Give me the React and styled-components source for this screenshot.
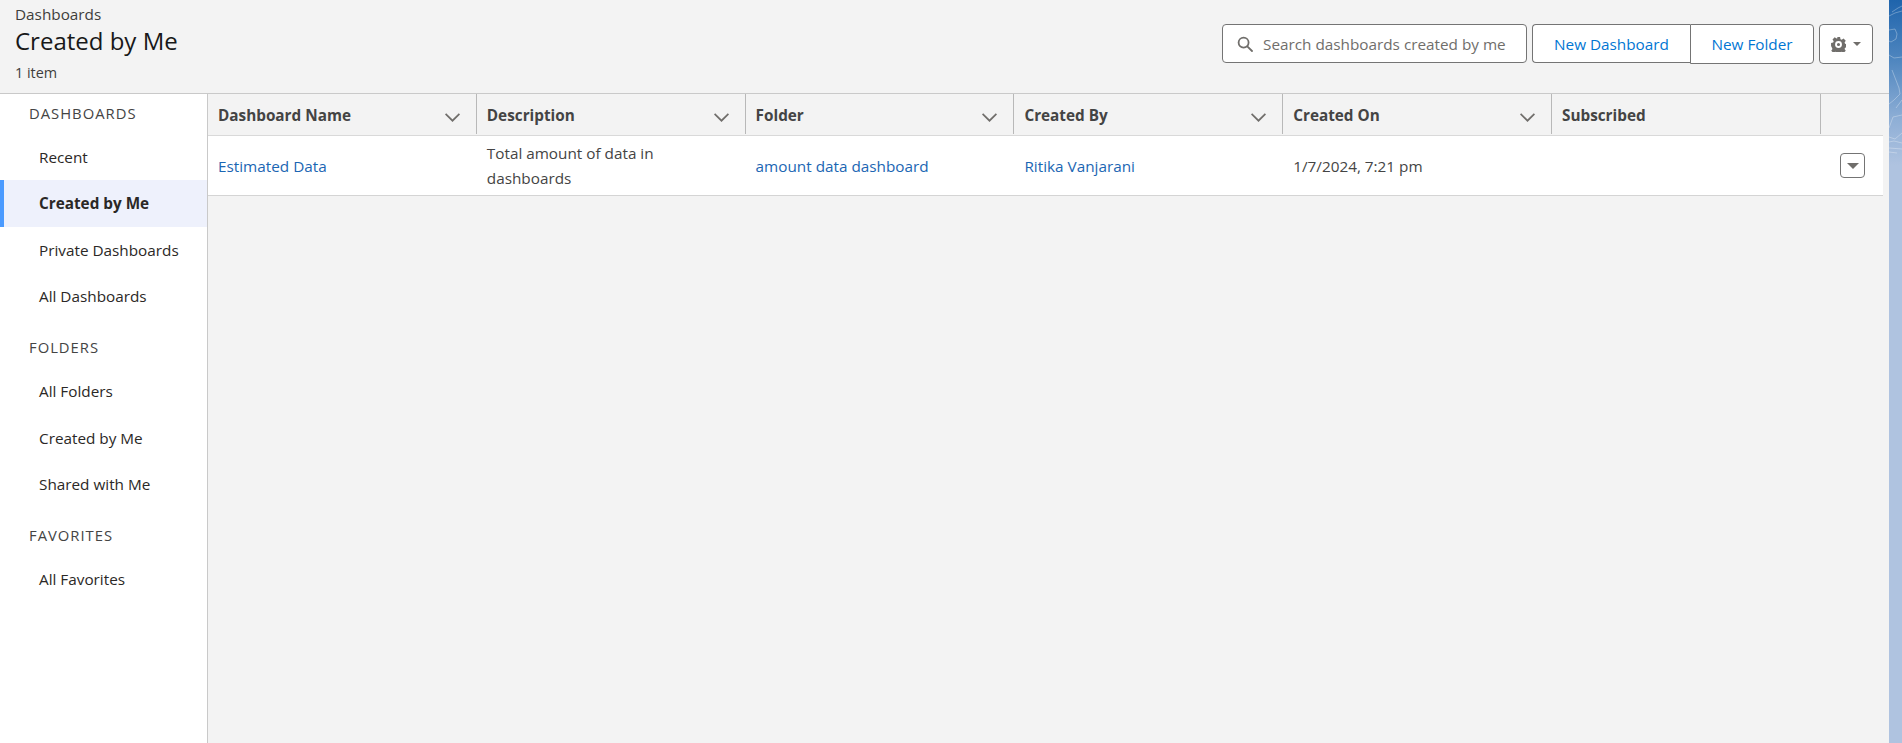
import styled, { createGlobalStyle } from 'styled-components';

const GlobalStyle = createGlobalStyle`
  html, body {
    margin: 0;
    height: 100%;
    overflow: hidden;
  }
  body {
    font-family: 'Open Sans', 'Noto Sans', sans-serif;
    font-size: 15.3px;
    color: #2b2826;
    background: #f3f3f3;
  }
`;

const nav = [
  { title: 'Dashboards', items: ['Recent', 'Created by Me', 'Private Dashboards', 'All Dashboards'], active: 'Created by Me' },
  { title: 'Folders', items: ['All Folders', 'Created by Me', 'Shared with Me'] },
  { title: 'Favorites', items: ['All Favorites'] },
];

const columns = [
  { label: 'Dashboard Name', sortable: true },
  { label: 'Description', sortable: true },
  { label: 'Folder', sortable: true },
  { label: 'Created By', sortable: true },
  { label: 'Created On', sortable: true },
  { label: 'Subscribed' },
];

const SortIcon = styled.svg`
  width: 15px;
  height: 9px;
  margin-top: 4px;
  flex: none;
`;

const Chevron = () => (
  <SortIcon viewBox="0 0 15 9" fill="none" stroke="#706e6b" strokeWidth="1.7">
    <path d="M.6.8 7.500 7.700 14.400.8" />
  </SortIcon>
);

const SearchIcon = () => (
  <svg width="16" height="16" viewBox="0 0 16 16" fill="none" stroke="#706e6b" strokeWidth="1.8">
    <circle cx="6.6" cy="6.6" r="5" />
    <path d="M10.3 10.3 15 15" strokeLinecap="round" />
  </svg>
);

const GearIcon = () => (
  <svg width="15" height="15" viewBox="0 0 24 24" fill="#706e6b">
    <path
      fillRule="evenodd"
      d="M9.500 0h5l.7 3.400 1.900.8 3-1.900 3.500 3.500-1.900 3 .8 1.900 3.400.7v5l-3.400.7-.8 1.900 1.900 3-3.500 3.500-3-1.900-1.900.8-.7 3.400h-5l-.7-3.400-1.900-.8-3 1.900-3.500-3.500 1.900-3-.8-1.900L.1 14.500v-5l3.400-.7.8-1.900-1.900-3 3.500-3.500 3 1.900 1.900-.8zM12 6.500a5.500 5.500 0 1 0 0 11 5.500 5.500 0 0 0 0-11zm0 3a2.500 2.500 0 1 1 0 5 2.500 2.500 0 0 1 0-5z"
    />
  </svg>
);

const Caret = styled.span`
  width: 0;
  height: 0;
  border-left: ${(p) => p.$size}px solid transparent;
  border-right: ${(p) => p.$size}px solid transparent;
  border-top: ${(p) => p.$size}px solid #706e6b;
`;

const Shell = styled.div`
  display: flex;
  height: 743px;
  width: 1902px;
`;

const Page = styled.div`
  width: 1889px;
  flex: none;
  display: flex;
  flex-direction: column;
`;

const Backdrop = styled.div`
  flex: 1;
  background: linear-gradient(180deg, #1f64ac 0, #4f86bf 60px, #8fafd6 120px, #afc3e0 165px, #afc3e0 100%);
`;

const Contours = () => (
  <svg width="13" height="743" viewBox="0 0 13 743" fill="none" stroke="#fff" strokeOpacity="0.3" strokeWidth="1">
    <path d="M3 12 9 8 13 6M0 16 6 13 13 11" />
    <path d="M0 30 6 29 8 34 7 39 2 42 0 41M0 55 5 58 13 57" />
    <path d="M3 70 10 88 11 94 5 100 0 104M13 100 7 108" />
    <path d="M0 128 4 117 13 115M0 137 6 139 13 133" />
    <path d="M0 142 5 141 13 143M0 148 13 149M0 152 8 153" />
  </svg>
);

const Header = styled.header`
  height: 94px;
  box-sizing: border-box;
  display: flex;
  justify-content: space-between;
  padding: 5px 16px 0 15px;
  border-bottom: 1px solid #c9c9c9;
`;

const Crumb = styled.div`
  line-height: 18px;
  color: #3e3e3c;
`;

const Title = styled.h1`
  margin: 2px 0 0;
  font-size: 24px;
  font-weight: 400;
  line-height: 32px;
  color: #181818;
`;

const Count = styled.div`
  margin-top: 7px;
  font-size: 14.400px;
  line-height: 18px;
  color: #3e3e3c;
`;

const Actions = styled.div`
  display: flex;
  align-items: flex-start;
  gap: 5px;
  margin-top: 19px;
`;

const Search = styled.div`
  width: 305px;
  height: 39px;
  box-sizing: border-box;
  display: flex;
  align-items: center;
  gap: 10px;
  padding-left: 14px;
  background: #fff;
  border: 1px solid #747474;
  border-radius: 4px;
  color: #706e6b;
  white-space: nowrap;
`;

const ButtonGroup = styled.div`
  display: flex;
  align-items: flex-start;
`;

const NewDashboard = styled.button`
  width: 158px;
  height: 39px;
  padding: 0;
  background: #fff;
  border: 1px solid #747474;
  border-right: 0;
  border-radius: 4px 0 0 4px;
  color: #0176d3;
  font: inherit;
`;

const NewFolder = styled.button`
  width: 124px;
  height: 40px;
  padding: 0;
  background: #fff;
  border: 1px solid #747474;
  border-radius: 0 4px 4px 0;
  color: #0176d3;
  font: inherit;
`;

const GearButton = styled.button`
  width: 54px;
  height: 40px;
  padding: 0;
  display: flex;
  align-items: center;
  justify-content: center;
  gap: 7px;
  background: #fff;
  border: 1px solid #747474;
  border-radius: 4px;
`;

const Body = styled.div`
  flex: 1;
  display: flex;
  min-height: 0;
`;

const Sidebar = styled.nav`
  width: 208px;
  flex: none;
  box-sizing: border-box;
  background: #fff;
  border-right: 1px solid #c9c9c9;
`;

const SectionTitle = styled.div`
  height: 39.500px;
  box-sizing: border-box;
  padding: 0 0 2px 29px;
  display: flex;
  align-items: center;
  font-size: 14.800px;
  letter-spacing: 1px;
  text-transform: uppercase;
  color: #444444;
`;

const NavItem = styled.div`
  height: 46.500px;
  box-sizing: border-box;
  display: flex;
  align-items: center;
  padding-left: ${(p) => (p.$active ? 35 : 39)}px;
  font-weight: ${(p) => (p.$active ? 700 : 400)};
  background: ${(p) => (p.$active ? '#eef1fc' : 'transparent')};
  border-left: ${(p) => (p.$active ? '4px solid #4b9bff' : '0')};
`;

const NavGroup = styled.div`
  margin-bottom: 9px;
`;

const Main = styled.main`
  flex: 1;
  padding-right: 6px;
`;

const HeadRow = styled.div`
  height: 41px;
  display: grid;
  grid-template-columns: repeat(6, 268.800px) 1fr;
  border-bottom: 1px solid #d9d9d9;
`;

const HeadCell = styled.div`
  height: 40px;
  box-sizing: border-box;
  display: flex;
  align-items: center;
  justify-content: space-between;
  padding: 2px 16px 0 10px;
  font-weight: 700;
  color: #444444;
  border-right: 1px solid #b8b8b8;
`;

const Row = styled.div`
  height: 59px;
  display: grid;
  grid-template-columns: repeat(6, 268.800px) 1fr;
  align-items: center;
  background: #fff;
  border-bottom: 1px solid #d4d4d4;
`;

const Cell = styled.div`
  padding: 1px 10px 0;
  line-height: 25px;
  color: ${(p) => (p.$link ? '#1b66b3' : '#444444')};
`;

const RowMenuCell = styled.div`
  display: flex;
  justify-content: flex-end;
  padding-right: 18px;
`;

const RowMenu = styled.button`
  width: 25px;
  height: 25px;
  padding: 0;
  display: flex;
  align-items: center;
  justify-content: center;
  background: #fff;
  border: 1px solid #747474;
  border-radius: 4px;
`;

export default function App() {
  return (
    <>
      <GlobalStyle />
      <Shell>
        <Page>
          <Header>
            <div>
              <Crumb>Dashboards</Crumb>
              <Title>Created by Me</Title>
              <Count>1 item</Count>
            </div>
            <Actions>
              <Search>
                <SearchIcon />
                Search dashboards created by me
              </Search>
              <ButtonGroup>
                <NewDashboard>New Dashboard</NewDashboard>
                <NewFolder>New Folder</NewFolder>
              </ButtonGroup>
              <GearButton>
                <GearIcon />
                <Caret $size={4} />
              </GearButton>
            </Actions>
          </Header>
          <Body>
            <Sidebar>
              {nav.map((group) => (
                <NavGroup key={group.title}>
                  <SectionTitle>{group.title}</SectionTitle>
                  {group.items.map((item) => (
                    <NavItem key={item} $active={item === group.active}>{item}</NavItem>
                  ))}
                </NavGroup>
              ))}
            </Sidebar>
            <Main>
              <HeadRow>
                {columns.map((col) => (
                  <HeadCell key={col.label}>
                    {col.label}
                    {col.sortable && <Chevron />}
                  </HeadCell>
                ))}
              </HeadRow>
              <Row>
                <Cell $link>Estimated Data</Cell>
                <Cell>Total amount of data in dashboards</Cell>
                <Cell $link>amount data dashboard</Cell>
                <Cell $link>Ritika Vanjarani</Cell>
                <Cell>1/7/2024, 7:21 pm</Cell>
                <Cell />
                <RowMenuCell>
                  <RowMenu>
                    <Caret $size={6} />
                  </RowMenu>
                </RowMenuCell>
              </Row>
            </Main>
          </Body>
        </Page>
        <Backdrop>
          <Contours />
        </Backdrop>
      </Shell>
    </>
  );
}
